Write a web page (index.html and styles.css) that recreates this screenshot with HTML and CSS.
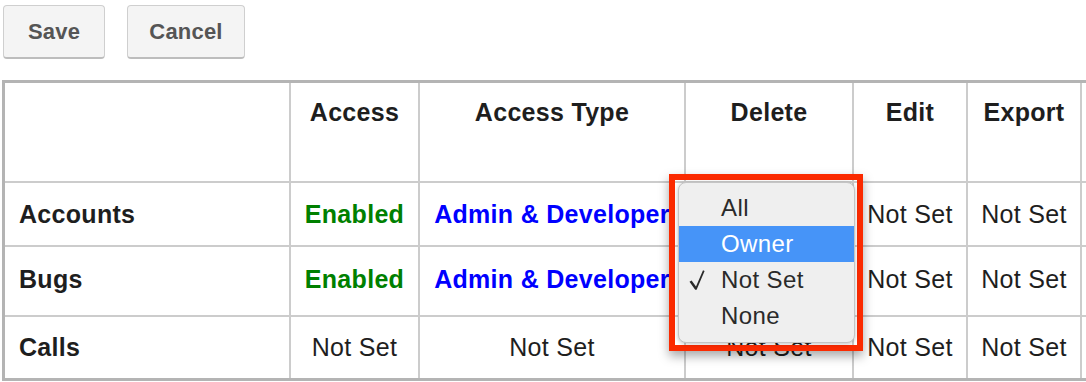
FILE: index.html
```html
<!DOCTYPE html>
<html>
<head>
<meta charset="utf-8">
<link rel="stylesheet" href="styles.css">
</head>
<body>
<div class="page">
  <div class="actions">
    <button class="btn btn-save">Save</button>
    <button class="btn btn-cancel">Cancel</button>
  </div>
  <div class="grid">
    <div class="cell head first"></div>
    <div class="cell head">Access</div>
    <div class="cell head">Access Type</div>
    <div class="cell head">Delete</div>
    <div class="cell head">Edit</div>
    <div class="cell head">Export</div>
    <div class="cell head"></div>

    <div class="cell first r1">Accounts</div>
    <div class="cell r1 green">Enabled</div>
    <div class="cell r1 blue">Admin &amp; Developer</div>
    <div class="cell r1"></div>
    <div class="cell r1">Not Set</div>
    <div class="cell r1">Not Set</div>
    <div class="cell r1"></div>

    <div class="cell first r2">Bugs</div>
    <div class="cell r2 green">Enabled</div>
    <div class="cell r2 blue">Admin &amp; Developer</div>
    <div class="cell r2"></div>
    <div class="cell r2">Not Set</div>
    <div class="cell r2">Not Set</div>
    <div class="cell r2"></div>

    <div class="cell first r3">Calls</div>
    <div class="cell r3">Not Set</div>
    <div class="cell r3">Not Set</div>
    <div class="cell r3">Not Set</div>
    <div class="cell r3">Not Set</div>
    <div class="cell r3">Not Set</div>
    <div class="cell r3"></div>
  </div>

  <div class="highlight">
    <div class="menu">
      <div class="item">All</div>
      <div class="item active">Owner</div>
      <div class="item"><svg class="check" width="16" height="22" viewBox="0 0 16 22"><path d="M0.5 12.8 L2.6 11.6 L7 17.6 L14 1.2 L15.6 2 L7.6 20.8 L6.2 20.8 Z" fill="#2a2a2a"/></svg>Not Set</div>
      <div class="item">None</div>
    </div>
  </div>
</div>
</body>
</html>
```

FILE: styles.css
```css
html, body {
  margin: 0;
  padding: 0;
  background: #ffffff;
  overflow: hidden;
}

body {
  font-family: "Liberation Sans", Arial, Helvetica, sans-serif;
  width: 1086px;
  height: 382px;
}

.page {
  position: relative;
  width: 1086px;
  height: 382px;
}

.actions {
  display: flex;
  gap: 22px;
  padding: 5px 0 0 3px;
  height: 54px;
}

.btn {
  height: 54px;
  box-sizing: border-box;
  background: #f4f4f4;
  border: 1px solid #cfcfcf;
  border-bottom: 2px solid #bdbdbd;
  border-radius: 4px;
  font-family: "Liberation Sans", Arial, sans-serif;
  font-weight: bold;
  font-size: 22px;
  letter-spacing: 0.2px;
  color: #555555;
  padding: 0;
  margin: 0;
}

.btn-save { width: 102px; }
.btn-cancel { width: 118px; }

.grid {
  margin-top: 21px;
  margin-left: 2px;
  display: grid;
  grid-template-columns: 284px 127px 264px 166px 112px 112px 120px;
  grid-template-rows: 98px 62px 68px 61px;
  gap: 2px;
  background: #cccccc;
  border: 3px solid #b4b4b4;
  width: max-content;
}

.cell {
  background: #ffffff;
  font-size: 25px;
  line-height: 29px;
  letter-spacing: 0.3px;
  color: #1e1e1e;
  text-align: center;
  white-space: nowrap;
  padding-top: 17px;
  box-sizing: border-box;
}

.head {
  font-weight: bold;
  padding-top: 15px;
}

.r2 { padding-top: 18px; }
.r3 { padding-top: 16px; }

.first {
  text-align: left;
  padding-left: 14px;
  font-weight: bold;
}

.green {
  color: #008000;
  font-weight: bold;
}

.blue {
  color: #0000ff;
  font-weight: bold;
}

.highlight {
  position: absolute;
  left: 669px;
  top: 174px;
  width: 194px;
  height: 177px;
  box-sizing: border-box;
  border: 6px solid #fb2a00;
  padding: 2px 2px 2px 3px;
  box-shadow: 0 5px 10px rgba(0, 0, 0, 0.35);
}

.menu {
  box-sizing: border-box;
  width: 177px;
  height: 161px;
  background: #efefef;
  border: 1px solid #c4c4c4;
  border-radius: 8px;
  box-shadow: 0 1px 4px rgba(0, 0, 0, 0.25);
  padding-top: 7px;
  font-family: "Liberation Sans", Arial, sans-serif;
}

.item {
  position: relative;
  height: 36px;
  line-height: 36px;
  font-size: 24px;
  letter-spacing: 0.4px;
  color: #2a2a2a;
  padding-left: 42px;
}

.item.active {
  background: #4694f8;
  color: #ffffff;
}

.check {
  position: absolute;
  left: 10px;
  top: 7px;
}
```
